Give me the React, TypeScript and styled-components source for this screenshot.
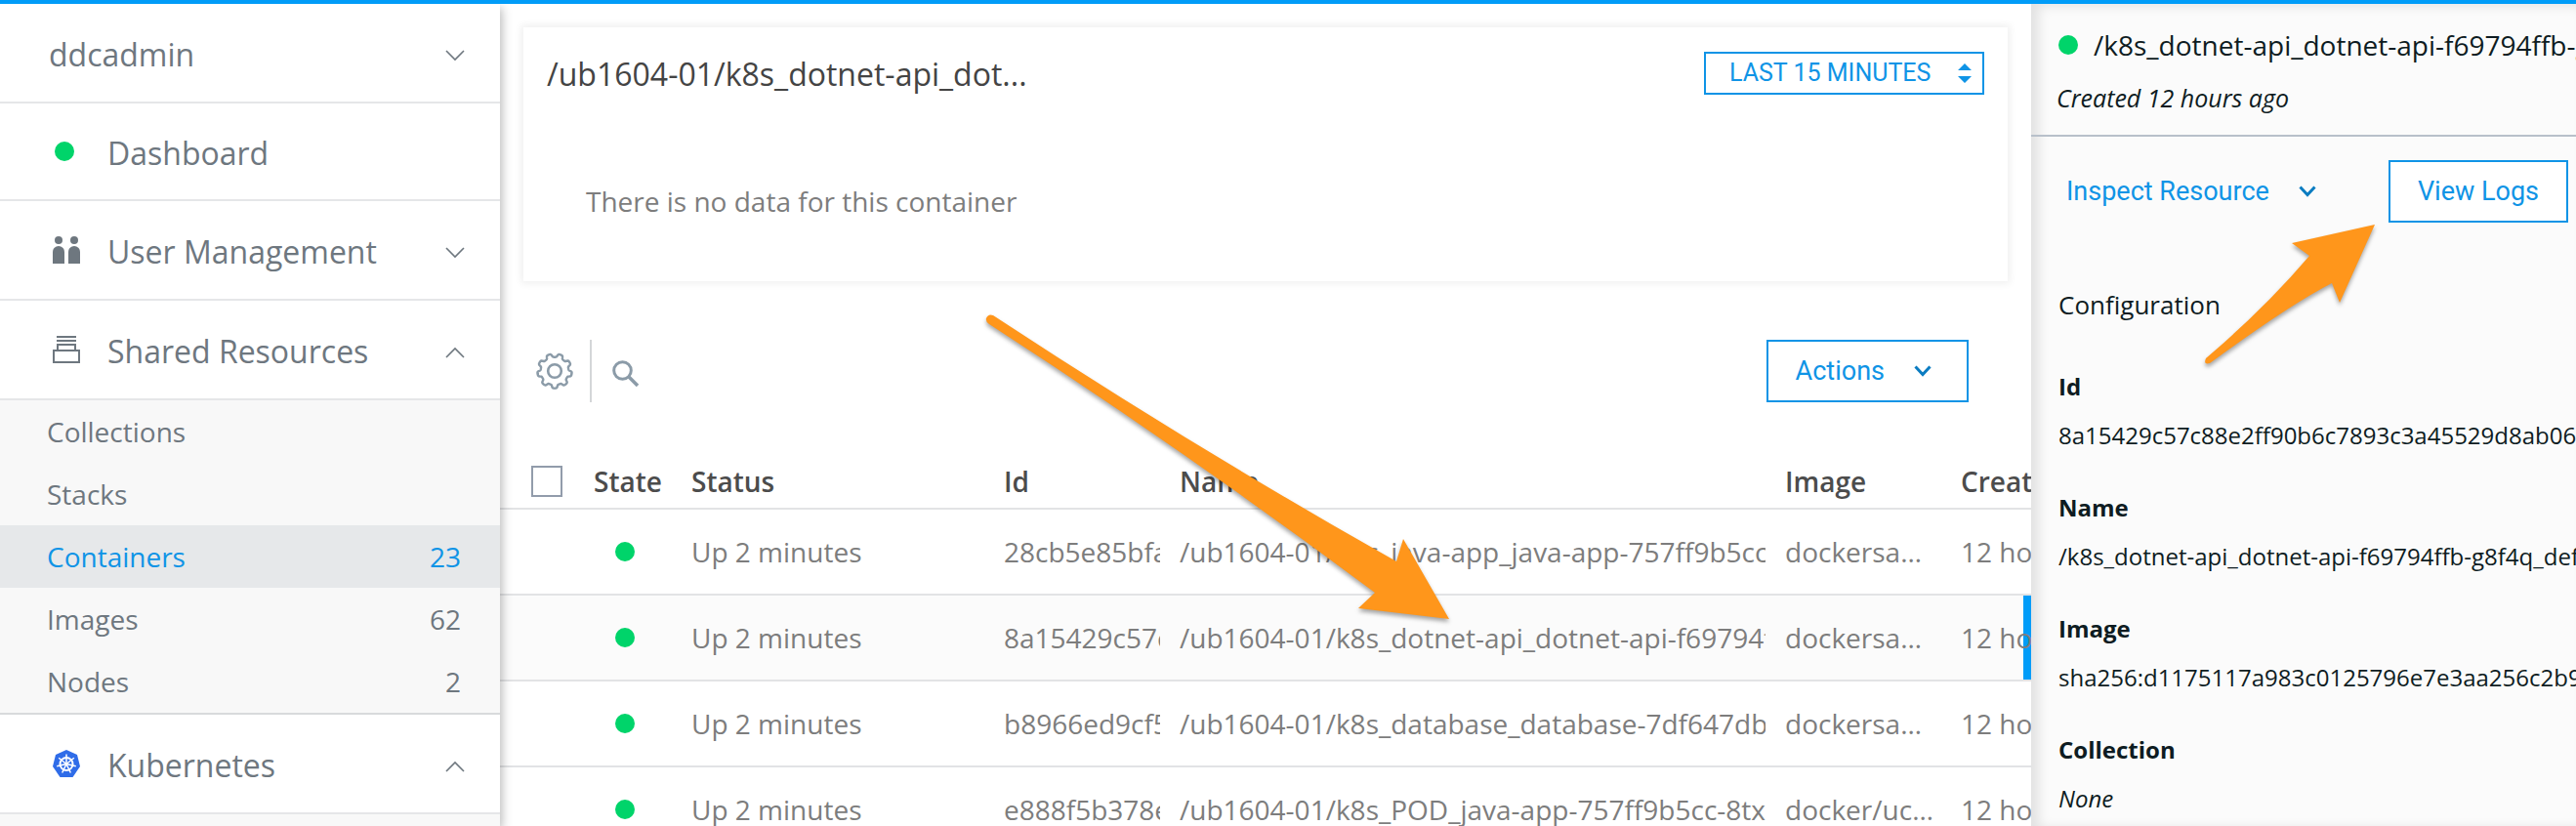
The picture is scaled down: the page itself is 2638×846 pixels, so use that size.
import React from 'react';
import styled, { createGlobalStyle, css } from 'styled-components';

const blue = '#0f94e6';
const green = '#00d46a';
const openSans = "'Open Sans', 'Noto Sans', sans-serif";
const system = "Roboto, Inter, sans-serif";

const GlobalStyle = createGlobalStyle`
  *, *::before, *::after { box-sizing: border-box; }
  html, body { margin: 0; background: #fff; }
  body { font-family: ${openSans}; font-size: 28px; line-height: 40px; color: #7d7d7d; overflow-x: hidden; }
  button, select, input { font: inherit; margin: 0; }
`;

const Page = styled.div`
  display: flex;
  height: 100vh;
  border-top: 4px solid #009cf8;
  overflow: hidden;
`;

const Sidebar = styled.nav`
  position: relative;
  z-index: 1;
  flex: none;
  width: 512px;
  background: #fff;
  color: #6e777f;
  box-shadow: 2px 4px 10px rgba(0, 0, 0, 0.28);
`;

const NavButton = styled.button<{ $short?: boolean }>`
  display: flex;
  align-items: center;
  width: 100%;
  height: ${(p) => (p.$short ? 100 : 102)}px;
  padding: 0 36px 0 50px;
  border: 0;
  border-bottom: 2px solid #e5e6e8;
  background: #fff;
  color: inherit;
  font-size: 32px;
  text-align: left;
  cursor: pointer;
`;

const NavIcon = styled.span<{ $inset?: number }>`
  display: flex;
  width: 60px;
  padding-left: ${(p) => p.$inset ?? 4}px;
`;

const NavLabel = styled.span`
  flex: 1;
  padding-top: 3px;
`;

const NavChevron = styled.svg`
  margin-top: 6px;
`;

const Dot = styled.span`
  display: block;
  flex: none;
  width: 20px;
  height: 20px;
  border-radius: 50%;
  background: ${green};
`;

const SubList = styled.ul`
  list-style: none;
  margin: 0;
  padding: 0;
  background: #f8f8f8;
  border-bottom: 2px solid #d8dadc;
`;

const SubLink = styled.a<{ $active?: boolean }>`
  display: flex;
  align-items: center;
  justify-content: space-between;
  height: 64px;
  padding: 0 40px 0 48px;
  color: ${(p) => (p.$active ? blue : 'inherit')};
  background: ${(p) => (p.$active ? '#e6e8ea' : 'transparent')};
  text-decoration: none;
`;

const SubFooter = styled.div`
  height: 40px;
  background: #f8f8f8;
`;

const Main = styled.main`
  flex: 1;
  min-width: 0;
  overflow: hidden;
  background: #fff;
`;

const Card = styled.section`
  margin: 24px 24px 0;
  height: 260px;
  padding: 24px 24px 0;
  box-shadow: 0 0 8px 2px rgba(0, 0, 0, 0.07);
`;

const CardHead = styled.header`
  display: flex;
  align-items: center;
  justify-content: space-between;
`;

const CardTitle = styled.h1`
  margin: 0;
  padding-top: 2px;
  font-size: 32px;
  line-height: 44px;
  font-weight: 400;
  color: #444;
  white-space: nowrap;
`;

const RangeBox = styled.div`
  position: relative;
  display: flex;
`;

const RangeSelect = styled.select`
  appearance: none;
  width: 287px;
  height: 44px;
  padding: 0 24px;
  border: 2px solid ${blue};
  border-radius: 0;
  background: #fff;
  color: ${blue};
  font-family: ${system};
  font-size: 25px;
`;

const RangeArrows = styled.svg`
  position: absolute;
  right: 13px;
  top: 12px;
  pointer-events: none;
`;

const EmptyText = styled.p`
  margin: 88px 40px 0;
`;

const Toolbar = styled.div`
  display: flex;
  align-items: center;
  margin: 60px 64px 0 24px;
  height: 64px;
`;

const IconButton = styled.button`
  display: flex;
  align-items: center;
  justify-content: center;
  height: 64px;
  padding: 0 13px;
  border: 0;
  background: none;
  cursor: pointer;
`;

const Divider = styled.span`
  width: 2px;
  height: 64px;
  margin: 0 8px 0 4px;
  background: #d4d6d8;
`;

const Spacer = styled.span`
  flex: 1;
`;

const ActionButton = styled.button<{ $plain?: boolean }>`
  display: flex;
  align-items: center;
  gap: 30px;
  height: 64px;
  border: 2px solid ${blue};
  background: #fff;
  padding: 0 36px 0 28px;
  color: ${blue};
  font-family: ${system};
  font-size: 27px;
  cursor: pointer;
  ${(p) =>
    p.$plain &&
    css`
      border-color: transparent;
      background: none;
      padding: 0 8px;
    `}
`;

const LogsButton = styled(ActionButton)`
  padding: 0 28px;
`;

const Table = styled.table`
  width: 1788px;
  table-layout: fixed;
  border-collapse: separate;
  border-spacing: 0;
  margin-top: 44px;
`;

const HeadCell = styled.th`
  height: 66px;
  padding: 0 20px 7px 0;
  border-bottom: 2px solid #e2e3e5;
  color: #4c4c4c;
  font-weight: 600;
  text-align: left;
  vertical-align: bottom;
  white-space: nowrap;
  &:first-child { padding-left: 32px; }
`;

const CheckBox = styled.input`
  appearance: none;
  display: block;
  width: 32px;
  height: 32px;
  && { margin-bottom: 4px; }
  border: 2px solid #929cab;
  background: #fff;
`;

const Row = styled.tr<{ $selected?: boolean }>`
  background: ${(p) => (p.$selected ? '#fbfbfb' : '#fff')};
`;

const Cell = styled.td`
  height: 88px;
  padding: 0 20px 0 0;
  border-bottom: 2px solid #e2e3e5;
`;

const Clip = styled.div<{ $ellipsis?: boolean }>`
  overflow: hidden;
  white-space: nowrap;
  text-overflow: ${(p) => (p.$ellipsis ? 'ellipsis' : 'clip')};
`;

const DotCell = styled(Cell)`
  padding-left: 22px;
`;

const CreatedCell = styled(Cell)<{ $selected?: boolean }>`
  padding: 0;
  white-space: nowrap;
  overflow: hidden;
  ${(p) =>
    p.$selected &&
    css`
      background: linear-gradient(#009cf8, #009cf8) 64px 0 / 8px 100% no-repeat;
    `}
`;

const Panel = styled.aside`
  flex: none;
  width: 558px;
  overflow: hidden;
  background: #fbfbfb;
  color: #0e1c22;
  white-space: nowrap;
  box-shadow: inset 8px 2px 12px rgba(0, 0, 0, 0.1);
`;

const PanelHead = styled.header`
  height: 136px;
  padding: 22px 0 0 26px;
  border-bottom: 2px solid #b8c0ca;
`;

const PanelTitle = styled.h2`
  display: flex;
  align-items: center;
  gap: 16px;
  margin: 0;
  padding-left: 2px;
  font-size: 28px;
  line-height: 40px;
  font-weight: 400;
`;

const Created = styled.p`
  margin: 16px 0 0;
  font-size: 25px;
  line-height: 36px;
  font-style: italic;
`;

const PanelActions = styled.div`
  display: flex;
  justify-content: space-between;
  padding: 24px 8px 0 26px;
`;

const PanelBody = styled.div`
  padding: 64px 0 0 28px;
`;

const SectionTitle = styled.h3`
  margin: 0 0 46px;
  font-size: 26px;
  line-height: 40px;
  font-weight: 400;
`;

const Facts = styled.dl`
  margin: 0;
  font-size: 24px;
  line-height: 36px;
`;

const Term = styled.dt`
  font-weight: 700;
`;

const Value = styled.dd<{ $italic?: boolean }>`
  margin: 14px 0 38px;
  font-style: ${(p) => (p.$italic ? 'italic' : 'normal')};
`;

const Arrows = styled.svg`
  position: absolute;
  z-index: 2;
  left: 0;
  top: 0;
  pointer-events: none;
  filter: drop-shadow(0 3px 2px rgba(0, 0, 0, 0.35));
`;

const Chevron = ({ up }: { up?: boolean }) => (
  <NavChevron width="20" height="12" viewBox="0 0 20 12" fill="none" stroke="#6e777f" strokeWidth="1.6">
    <path d={up ? 'M1 11 10 2 19 11' : 'M1 1 10 10 19 1'} />
  </NavChevron>
);

const BoldChevron = () => (
  <svg width="18" height="12" viewBox="0 0 18 12" fill="none" stroke="#0b7cc1" strokeWidth="3">
    <path d="M1.5 1.5 9 9.5 16.5 1.5" />
  </svg>
);

const UsersIcon = () => (
  <svg width="28" height="28" viewBox="0 0 28 28" fill="#6e777f">
    <circle cx="6" cy="4" r="4" />
    <circle cx="22" cy="4" r="4" />
    <path d="M0 28V16a6 6 0 0 1 12 0v12zM16 28V16a6 6 0 0 1 12 0v12z" />
  </svg>
);

const StackIcon = () => (
  <svg width="28" height="28" viewBox="0 0 28 28" fill="none" stroke="#6e777f" strokeWidth="2">
    <path d="M4 1h20M4 5h20M5 15V9h18v6M1 15h26v12H1z" />
  </svg>
);

const KubeIcon = () => (
  <svg width="28" height="28" viewBox="0 0 28 28">
    <path fill="#2f6ce8" d="M14 0 25 5 28 17 20.5 28H7.5L0 17 3 5z" />
    <g fill="none" stroke="#fff">
      <circle cx="14" cy="14.5" r="6.5" strokeWidth="2" />
      {[0, 1, 2, 3, 4, 5, 6].map((i) => (
        <path key={i} strokeWidth="1.5" d="M14 14.5V4.5" transform={`rotate(${(i * 360) / 7} 14 14.5)`} />
      ))}
    </g>
  </svg>
);

// Nine rounded teeth around the hub, with a valley at the top.
const gearPath = (() => {
  const pts: string[] = [];
  for (let i = 0; i <= 180; i++) {
    const a = (i / 180) * Math.PI * 2;
    const w = Math.cos(a * 9 + Math.PI);
    const r = 16 + 1.7 * Math.tanh(w * 2.5);
    pts.push(`${(19 + r * Math.sin(a)).toFixed(2)} ${(19 - r * Math.cos(a)).toFixed(2)}`);
  }
  return `M${pts.join('L')}Z`;
})();

const GearIcon = () => (
  <svg width="38" height="38" viewBox="0 0 38 38" fill="none" stroke="#8b9ba8" strokeWidth="2.4">
    <path d={gearPath} strokeLinejoin="round" />
    <circle cx="19" cy="19" r="6.8" strokeWidth="2.6" />
  </svg>
);

const SearchIcon = () => (
  <svg width="28" height="34" viewBox="0 0 28 34" fill="none" stroke="#8b9ba8">
    <circle cx="10.500" cy="16.500" r="8.800" strokeWidth="3" />
    <path d="M17 23 26 32" strokeWidth="3.6" />
  </svg>
);

const subItems = [
  { label: 'Collections' },
  { label: 'Stacks' },
  { label: 'Containers', count: 23, active: true },
  { label: 'Images', count: 62 },
  { label: 'Nodes', count: 2 },
];

const containers = [
  { id: '28cb5e85bfa1', name: '/ub1604-01/k8s_java-app_java-app-757ff9b5cc-8tx', image: 'dockersamples' },
  { id: '8a15429c57c8', name: '/ub1604-01/k8s_dotnet-api_dotnet-api-f69794ffb', image: 'dockersamples', selected: true },
  { id: 'b8966ed9cf5e', name: '/ub1604-01/k8s_database_database-7df647dbc', image: 'dockersamples' },
  { id: 'e888f5b378e0', name: '/ub1604-01/k8s_POD_java-app-757ff9b5cc-8tx', image: 'docker/ucp-pause' },
];

const facts = [
  { term: 'Id', value: '8a15429c57c88e2ff90b6c7893c3a45529d8ab06' },
  { term: 'Name', value: '/k8s_dotnet-api_dotnet-api-f69794ffb-g8f4q_default' },
  { term: 'Image', value: 'sha256:d1175117a983c0125796e7e3aa256c2b9' },
  { term: 'Collection', value: 'None', italic: true },
];

export default function App() {
  return (
    <>
      <GlobalStyle />
      <Page>
        <Sidebar>
          <NavButton>
            <NavLabel>ddcadmin</NavLabel>
            <Chevron />
          </NavButton>
          <NavButton $short>
            <NavIcon $inset={6}><Dot /></NavIcon>
            <NavLabel>Dashboard</NavLabel>
          </NavButton>
          <NavButton>
            <NavIcon><UsersIcon /></NavIcon>
            <NavLabel>User Management</NavLabel>
            <Chevron />
          </NavButton>
          <NavButton>
            <NavIcon><StackIcon /></NavIcon>
            <NavLabel>Shared Resources</NavLabel>
            <Chevron up />
          </NavButton>
          <SubList>
            {subItems.map((item) => (
              <li key={item.label}>
                <SubLink href="#" $active={item.active}>
                  <span>{item.label}</span>
                  <span>{item.count}</span>
                </SubLink>
              </li>
            ))}
          </SubList>
          <NavButton>
            <NavIcon><KubeIcon /></NavIcon>
            <NavLabel>Kubernetes</NavLabel>
            <Chevron up />
          </NavButton>
          <SubFooter />
        </Sidebar>

        <Main>
          <Card>
            <CardHead>
              <CardTitle>/ub1604-01/k8s_dotnet-api_dot...</CardTitle>
              <RangeBox>
                <RangeSelect aria-label="Time range">
                  <option>LAST 15 MINUTES</option>
                </RangeSelect>
                <RangeArrows width="14" height="20" viewBox="0 0 14 20" fill={blue}>
                  <path d="M7 0 14 7H0zM0 13h14L7 20z" />
                </RangeArrows>
              </RangeBox>
            </CardHead>
            <EmptyText>There is no data for this container</EmptyText>
          </Card>

          <Toolbar>
            <IconButton aria-label="Settings"><GearIcon /></IconButton>
            <Divider />
            <IconButton aria-label="Search"><SearchIcon /></IconButton>
            <Spacer />
            <ActionButton>Actions <BoldChevron /></ActionButton>
          </Toolbar>

          <Table>
            <colgroup>
              <col style={{ width: 96 }} />
              <col style={{ width: 100 }} />
              <col style={{ width: 320 }} />
              <col style={{ width: 180 }} />
              <col style={{ width: 620 }} />
              <col style={{ width: 180 }} />
              <col />
            </colgroup>
            <thead>
              <tr>
                <HeadCell><CheckBox type="checkbox" aria-label="Select all containers" /></HeadCell>
                <HeadCell>State</HeadCell>
                <HeadCell>Status</HeadCell>
                <HeadCell>Id</HeadCell>
                <HeadCell>Name</HeadCell>
                <HeadCell>Image</HeadCell>
                <HeadCell>Created</HeadCell>
              </tr>
            </thead>
            <tbody>
              {containers.map((c) => (
                <Row key={c.id} $selected={c.selected}>
                  <Cell />
                  <DotCell><Dot /></DotCell>
                  <Cell>Up 2 minutes</Cell>
                  <Cell><Clip>{c.id}</Clip></Cell>
                  <Cell><Clip>{c.name}</Clip></Cell>
                  <Cell><Clip $ellipsis>{c.image}</Clip></Cell>
                  <CreatedCell $selected={c.selected}>12 hours ago</CreatedCell>
                </Row>
              ))}
            </tbody>
          </Table>
        </Main>

        <Panel>
          <PanelHead>
            <PanelTitle><Dot />/k8s_dotnet-api_dotnet-api-f69794ffb-g8f4q</PanelTitle>
            <Created>Created 12 hours ago</Created>
          </PanelHead>
          <PanelActions>
            <ActionButton $plain>Inspect Resource <BoldChevron /></ActionButton>
            <LogsButton>View Logs</LogsButton>
          </PanelActions>
          <PanelBody>
            <SectionTitle>Configuration</SectionTitle>
            <Facts>
              {facts.map((f) => (
                <React.Fragment key={f.term}>
                  <Term>{f.term}</Term>
                  <Value $italic={f.italic}>{f.value}</Value>
                </React.Fragment>
              ))}
            </Facts>
          </PanelBody>
        </Panel>
      </Page>
      <Arrows width="2638" height="846" viewBox="0 0 2638 846" fill="#ff961b">
        <path d="M1017 323Q1224 459 1430 575L1437 552 1484 634 1391 623 1408 607Q1214 462 1013 332 1009 329 1010 326 1012 321 1017 323Z" />
        <path d="M2259 367Q2320 315 2365 262L2347 249 2432 230 2396 310 2388 290Q2345 312 2263 372 2256 374 2259 367Z" />
      </Arrows>
    </>
  );
}
